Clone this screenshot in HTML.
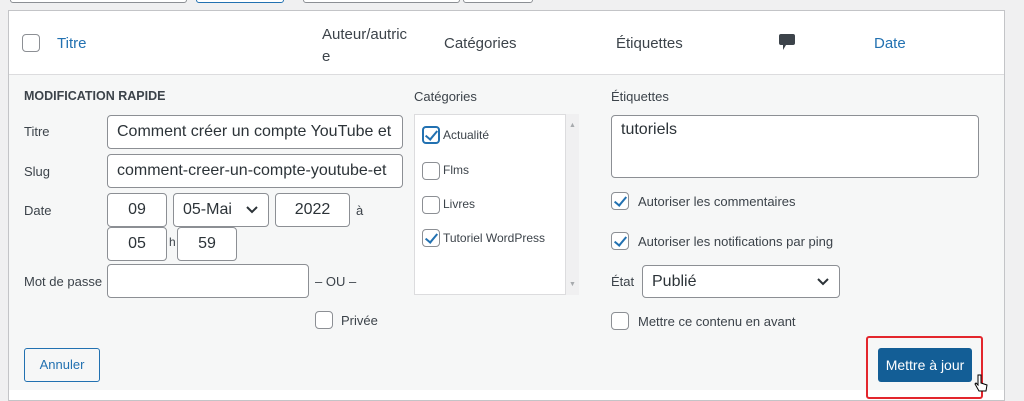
<!DOCTYPE html>
<html><head><meta charset="utf-8"><style>
*{box-sizing:border-box}
body{margin:0;width:1024px;height:401px;background:#f0f0f1;font-family:"Liberation Sans",sans-serif;color:#3c434a;position:relative;overflow:hidden}
.a{position:absolute}
.inp{position:absolute;background:#fff;border:1px solid #8c8f94;border-radius:4px;font-size:16px;color:#2c3338;padding:0 9px;line-height:32px;white-space:nowrap;overflow:hidden}
.cb{position:absolute;width:18px;height:18px;border:1px solid #8c8f94;border-radius:4px;background:#fff}
.lbl{position:absolute;font-size:13px;color:#3c434a}
.chk::after{content:"";position:absolute;left:5px;top:1px;width:5px;height:10px;border:solid #2271b1;border-width:0 2.5px 2.5px 0;transform:rotate(40deg)}
.chk2::after{content:"";position:absolute;left:4px;top:0px;width:5px;height:10px;border:solid #2271b1;border-width:0 2.5px 2.5px 0;transform:rotate(40deg)}
</style></head><body>
<div class="a" style="left:10px;top:-4px;width:177px;height:7px;border:1px solid #8c8f94;border-radius:3px;background:#fff"></div>
<div class="a" style="left:196px;top:-4px;width:88px;height:7px;border:1px solid #2271b1;border-radius:3px;background:#fff"></div>
<div class="a" style="left:303px;top:-4px;width:157px;height:7px;border:1px solid #8c8f94;border-radius:3px;background:#fff"></div>
<div class="a" style="left:463px;top:-4px;width:70px;height:7px;border:1px solid #8c8f94;border-radius:3px;background:#fff"></div>
<div class="a" style="left:8px;top:10px;width:997px;height:391px;border:1px solid #c3c4c7;background:#fff"></div>
<div class="a" style="left:9px;top:74px;width:995px;height:316px;background:#f6f7f7;border-top:1px solid #dcdcde"></div>
<div class="cb" style="left:22px;top:34px"></div>
<div class="lbl" style="left:57px;top:35px;font-size:15px;color:#2271b1">Titre</div>
<div class="lbl" style="left:322px;top:24px;font-size:15px;line-height:22px">Auteur/autric<br>e</div>
<div class="lbl" style="left:444px;top:35px;font-size:15px">Catégories</div>
<div class="lbl" style="left:616px;top:35px;font-size:15px">Étiquettes</div>
<svg class="a" style="left:778px;top:33px" width="18" height="20" viewBox="0 0 18 20"><path d="M3 1h12a2 2 0 0 1 2 2v7a2 2 0 0 1-2 2h-7l-3 5v-5h-2a2 2 0 0 1-2-2v-7a2 2 0 0 1 2-2z" fill="#3c434a"/></svg>
<div class="lbl" style="left:874px;top:35px;font-size:15px;color:#2271b1">Date</div>
<div class="lbl" style="left:24px;top:89px;font-weight:bold;font-size:12.5px">MODIFICATION RAPIDE</div>
<div class="lbl" style="left:24px;top:124px">Titre</div>
<div class="inp" style="left:107px;top:115px;width:296px;height:34px">Comment créer un compte YouTube et</div>
<div class="lbl" style="left:24px;top:164px">Slug</div>
<div class="inp" style="left:107px;top:154px;width:296px;height:34px">comment-creer-un-compte-youtube-et</div>
<div class="lbl" style="left:24px;top:203px">Date</div>
<div class="inp" style="left:107px;top:193px;width:60px;height:34px;text-align:center">09</div>
<div class="inp" style="left:173px;top:193px;width:96px;height:34px">05-Mai<svg style="position:absolute;right:10px;top:12px" width="12" height="8"><path d="M1 1l5 5 5-5" stroke="#2c3338" stroke-width="2" fill="none"/></svg></div>
<div class="inp" style="left:275px;top:193px;width:75px;height:34px;text-align:center">2022</div>
<div class="lbl" style="left:356px;top:203px">à</div>
<div class="inp" style="left:107px;top:227px;width:60px;height:34px;text-align:center">05</div>
<div class="lbl" style="left:169px;top:235px;font-size:12px">h</div>
<div class="inp" style="left:177px;top:227px;width:60px;height:34px;text-align:center">59</div>
<div class="lbl" style="left:24px;top:274px">Mot de passe</div>
<div class="inp" style="left:107px;top:264px;width:202px;height:34px"></div>
<div class="lbl" style="left:315px;top:274px">– OU –</div>
<div class="cb" style="left:315px;top:311px"></div>
<div class="lbl" style="left:341px;top:313px">Privée</div>
<div class="a" style="left:24px;top:348px;width:76px;height:34px;border:1px solid #2271b1;border-radius:3px;background:#f6f7f7;color:#2271b1;font-size:13px;text-align:center;line-height:32px">Annuler</div>
<div class="lbl" style="left:414px;top:89px">Catégories</div>
<div class="a" style="left:414px;top:114px;width:152px;height:181px;background:#fff;border:1px solid #dcdcde"></div>
<div class="a" style="left:566px;top:114px;width:13px;height:181px;background:#f0f0f1"></div>
<div class="a" style="left:569px;top:122px;font-size:7px;color:#a7aaad">▲</div>
<div class="a" style="left:569px;top:281px;font-size:7px;color:#a7aaad">▼</div>
<div class="cb chk2" style="left:422px;top:126px;border:2px solid #2271b1"></div>
<div class="lbl" style="left:443px;top:128px;font-size:12px">Actualité</div>
<div class="cb" style="left:422px;top:162px"></div>
<div class="lbl" style="left:443px;top:163px;font-size:12px">Flms</div>
<div class="cb" style="left:422px;top:196px"></div>
<div class="lbl" style="left:443px;top:197px;font-size:12px">Livres</div>
<div class="cb chk" style="left:422px;top:229px"></div>
<div class="lbl" style="left:443px;top:231px;font-size:12px">Tutoriel WordPress</div>
<div class="lbl" style="left:611px;top:89px">Étiquettes</div>
<div class="inp" style="left:611px;top:115px;width:368px;height:63px;line-height:28px;padding-top:0">tutoriels</div>
<div class="cb chk" style="left:611px;top:192px"></div>
<div class="lbl" style="left:638px;top:194px">Autoriser les commentaires</div>
<div class="cb chk" style="left:611px;top:232px"></div>
<div class="lbl" style="left:638px;top:234px">Autoriser les notifications par ping</div>
<div class="lbl" style="left:611px;top:274px">État</div>
<div class="inp" style="left:642px;top:265px;width:198px;height:33px">Publié<svg style="position:absolute;right:10px;top:12px" width="12" height="8"><path d="M1 1l5 5 5-5" stroke="#2c3338" stroke-width="2" fill="none"/></svg></div>
<div class="cb" style="left:611px;top:312px"></div>
<div class="lbl" style="left:638px;top:314px">Mettre ce contenu en avant</div>
<div class="a" style="left:866px;top:336px;width:117px;height:63px;border:2px solid #e3262d;border-radius:3px"></div>
<div class="a" style="left:878px;top:348px;width:94px;height:34px;background:#135e96;border-radius:3px;color:#fff;font-size:14px;text-align:center;line-height:34px">Mettre à jour</div>
<svg class="a" style="left:974px;top:374px" width="14" height="20" viewBox="0 0 14 20"><path d="M4 1v10l-2-2-1 1 4 7h7l1-6-6-2V1z" fill="#fff" stroke="#000" stroke-width="1"/></svg>
</body></html>
